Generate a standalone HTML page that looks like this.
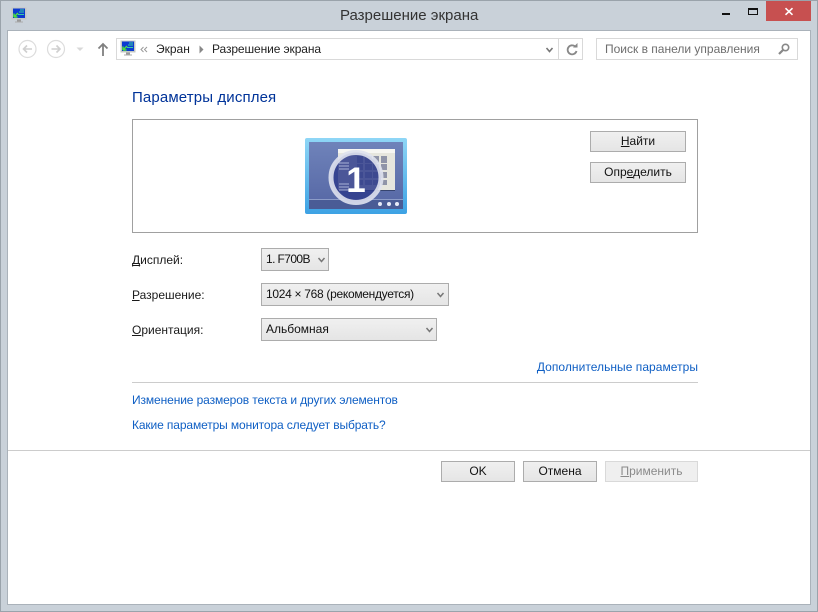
<!DOCTYPE html>
<html lang="ru"><head><meta charset="utf-8"><title>Разрешение экрана</title>
<style>
html,body{margin:0;padding:0}
body{width:818px;height:612px;overflow:hidden;position:relative;background:#c9d1d9;font-family:"Liberation Sans",sans-serif;font-size:12px;color:#1a1a1a}
.t{position:absolute;white-space:nowrap;line-height:16px;height:16px}
.box{position:absolute;box-sizing:border-box}
.btn{position:absolute;box-sizing:border-box;border:1px solid #acacac;background:linear-gradient(#f0f0f0,#e5e5e5);text-align:center;line-height:19px;height:21px;color:#111}
.sel{position:absolute;box-sizing:border-box;border:1px solid #acacac;background:linear-gradient(#f0f0f0,#e5e5e5);height:23px;line-height:21px;padding-left:4px;color:#111;white-space:nowrap}
.link{color:#0f5fc4}
u{text-decoration:underline;text-decoration-skip-ink:none}
svg{position:absolute;overflow:visible}
</style></head><body>
<div class="box" style="left:0;top:0;width:818px;height:612px;border:1px solid #9aa3ab"></div>
<div class="box" style="left:7px;top:30px;width:804px;height:575px;background:#fff;border:1px solid #aab2ba"></div>

<svg style="left:11px;top:7px" width="16" height="16" viewBox="0 0 16 16"><rect x="0.5" y="0.500" width="15" height="12" fill="#c4c8c4"/><rect x="2" y="1.500" width="12" height="9.500" fill="#0c3ad0"/><path d="M3 10l4-4M3 10V6.500M3 10h3.500" stroke="#4fe03c" stroke-width="1.500" fill="none"/><path d="M7 7.500h6M8 5h5M9 3h4" stroke="#38d0a0" stroke-width="1" fill="none"/><rect x="6" y="12.500" width="4" height="2" fill="#999"/><rect x="4" y="14.500" width="8" height="1" fill="#aaa"/></svg>
<div class="t" style="left:340px;top:8px;font-size:15px;color:#333">Разрешение экрана</div>

<div class="box" style="left:722px;top:13px;width:8px;height:2px;background:#111"></div>
<div class="box" style="left:748px;top:8px;width:10px;height:7px;border:1px solid #111;border-top-width:2px"></div>
<div class="box" style="left:766px;top:1px;width:45px;height:20px;background:#c75050"></div>
<svg style="left:785px;top:8px" width="8" height="7" viewBox="0 0 8 7"><path d="M0.500 0.200L7.500 6.800M7.500 0.200L0.500 6.800" stroke="#fff" stroke-width="1.600"/></svg>

<svg style="left:18px;top:40px" width="60" height="18" viewBox="0 0 60 18" fill="none"><circle cx="9.500" cy="9" r="8.500" stroke="#dcdcdc" stroke-width="1.200"/><path d="M14 9H6M9 5.500L5.500 9L9 12.500" stroke="#cfcfcf" stroke-width="1.600"/><circle cx="38" cy="9" r="8.500" stroke="#dcdcdc" stroke-width="1.200"/><path d="M33.500 9h8M38.500 5.500L42 9L38.500 12.500" stroke="#cfcfcf" stroke-width="1.600"/><path d="M58.500 7.500h7l-3.500 3.500z" fill="#d8d8d8"/></svg>
<svg style="left:97px;top:42px" width="12" height="14" viewBox="0 0 12 14" fill="none"><path d="M6 14V2M1.500 6.500L6 2l4.500 4.500" stroke="#808080" stroke-width="1.800"/></svg>

<div class="box" style="left:116px;top:38px;width:467px;height:22px;border:1px solid #d9d9d9"></div>
<div class="box" style="left:558px;top:38px;width:1px;height:22px;background:#d9d9d9"></div>
<svg style="left:120px;top:40px" width="16" height="16" viewBox="0 0 16 16"><rect x="0.500" y="0.500" width="15" height="12" fill="#c4c8c4"/><rect x="2" y="1.500" width="12" height="9.500" fill="#0c3ad0"/><path d="M3 10l4-4M3 10V6.500M3 10h3.500" stroke="#4fe03c" stroke-width="1.500" fill="none"/><path d="M7 7.500h6M8 5h5M9 3h4" stroke="#38d0a0" stroke-width="1" fill="none"/><rect x="6" y="12.500" width="4" height="2" fill="#999"/><rect x="4" y="14.500" width="8" height="1" fill="#aaa"/></svg>
<svg style="left:140px;top:46px" width="8" height="7" viewBox="0 0 8 7" fill="none"><path d="M3.500 1L1 3.500L3.500 6M7 1L4.500 3.500L7 6" stroke="#999" stroke-width="1"/></svg>
<div class="t" style="left:156px;top:41px;color:#222">Экран</div>
<svg style="left:199px;top:45px" width="5" height="9" viewBox="0 0 5 9"><path d="M0.500 0.500L4.500 4.500L0.500 8.500z" fill="#888"/></svg>
<div class="t" style="left:212px;top:41px;color:#222;letter-spacing:-0.1px">Разрешение экрана</div>
<svg style="left:546px;top:47px" width="7" height="6" viewBox="0 0 7 6" fill="none"><path d="M0.500 1L3.500 4.500L6.500 1" stroke="#777" stroke-width="1.600"/></svg>
<svg style="left:566px;top:43px" width="12" height="13" viewBox="0 0 12 13" fill="none"><path d="M9.800 4.200A4.500 4.500 0 1 0 10.500 8" stroke="#888" stroke-width="1.800"/><path d="M7 4.500h4.500V0z" fill="#888"/></svg>

<div class="box" style="left:596px;top:38px;width:202px;height:22px;border:1px solid #d9d9d9"></div>
<div class="t" style="left:605px;top:41px;color:#6d6d6d">Поиск в панели управления</div>
<svg style="left:778px;top:43px" width="12" height="12" viewBox="0 0 12 12" fill="none"><circle cx="7.500" cy="4.500" r="3.200" stroke="#888" stroke-width="1.600"/><path d="M5 7L1 11" stroke="#888" stroke-width="2.200"/></svg>

<div class="t" style="left:132px;top:90px;font-size:15px;color:#003399;letter-spacing:0.13px">Параметры дисплея</div>
<div class="box" style="left:132px;top:119px;width:566px;height:114px;border:1px solid #a0a0a0"></div>

<svg style="left:305px;top:138px" width="102" height="76" viewBox="0 0 102 76">
<defs><linearGradient id="g" x1="0" y1="0" x2="0" y2="1"><stop offset="0" stop-color="#6f83ba"/><stop offset="1" stop-color="#5566a4"/></linearGradient>
<linearGradient id="f" x1="0" y1="0" x2="0" y2="1"><stop offset="0" stop-color="#8fd6f6"/><stop offset="1" stop-color="#3da2e4"/></linearGradient></defs>
<rect x="0" y="0" width="102" height="76" rx="2" fill="url(#f)"/>
<rect x="4" y="4" width="94" height="67" fill="url(#g)"/>
<rect x="4" y="61" width="94" height="10" fill="#4a5c96"/>
<rect x="4" y="61" width="94" height="1" fill="#8c9cc8"/>
<rect x="33" y="11" width="57" height="41" fill="#e6e6de"/>
<rect x="33" y="11" width="57" height="4" fill="#f6f6f2"/>
<rect x="33" y="52" width="57" height="1" fill="#36446f"/>
<g fill="#8f94a8"><rect x="52" y="18" width="6" height="7"/><rect x="60" y="18" width="7" height="7"/><rect x="68" y="18" width="6" height="7"/><rect x="76" y="18" width="6" height="7"/><rect x="52" y="26" width="6" height="6"/><rect x="60" y="26" width="7" height="6"/><rect x="68" y="26" width="6" height="6"/><rect x="76" y="26" width="6" height="6"/><rect x="52" y="34" width="6" height="6"/><rect x="60" y="34" width="7" height="6"/><rect x="68" y="34" width="6" height="6"/><rect x="76" y="34" width="6" height="6"/><rect x="52" y="42" width="6" height="5"/><rect x="60" y="42" width="7" height="5"/><rect x="68" y="42" width="6" height="5"/><rect x="76" y="42" width="6" height="5"/></g>
<circle cx="51" cy="39.500" r="25" fill="#2f3c8c" fill-opacity="0.85" stroke="#dfe2ee" stroke-opacity="0.9" stroke-width="5"/>
<g stroke="#aab2d8" stroke-width="1"><path d="M34 25h10M34 28h10M34 31h10M34 46h10M34 49h10M34 52h10"/></g>
<text x="51" y="54" text-anchor="middle" font-family="Liberation Sans" font-weight="bold" font-size="35" fill="#fff">1</text>
<g fill="#e8ecf8"><circle cx="75" cy="66" r="2"/><circle cx="84" cy="66" r="2"/><circle cx="92" cy="66" r="2"/></g>
</svg>

<div class="btn" style="left:590px;top:131px;width:96px"><u>Н</u>айти</div>
<div class="btn" style="left:590px;top:162px;width:96px">Опр<u>е</u>делить</div>

<div class="t" style="left:132px;top:252px"><u>Д</u>исплей:</div>
<div class="t" style="left:132px;top:287px"><u>Р</u>азрешение:</div>
<div class="t" style="left:132px;top:322px"><u>О</u>риентация:</div>

<div class="sel" style="left:261px;top:248px;width:68px;letter-spacing:-0.6px">1. F700B</div>
<div class="sel" style="left:261px;top:283px;width:188px;letter-spacing:-0.3px">1024 × 768 (рекомендуется)</div>
<div class="sel" style="left:261px;top:318px;width:176px">Альбомная</div>
<svg style="left:317.500px;top:257px" width="7" height="6" viewBox="0 0 7 6" fill="none"><path d="M0.500 1L3.500 4.500L6.500 1" stroke="#777" stroke-width="1.500"/></svg>
<svg style="left:437px;top:292px" width="7" height="6" viewBox="0 0 7 6" fill="none"><path d="M0.500 1L3.500 4.500L6.500 1" stroke="#777" stroke-width="1.500"/></svg>
<svg style="left:426px;top:327px" width="7" height="6" viewBox="0 0 7 6" fill="none"><path d="M0.500 1L3.500 4.500L6.500 1" stroke="#777" stroke-width="1.500"/></svg>

<div class="t link" style="right:120px;top:359px;letter-spacing:0.04px">Дополнительные параметры</div>
<div class="box" style="left:132px;top:382px;width:566px;height:1px;background:#ccc"></div>
<div class="t link" style="left:132px;top:392px;letter-spacing:-0.11px">Изменение размеров текста и других элементов</div>
<div class="t link" style="left:132px;top:417px;letter-spacing:-0.12px">Какие параметры монитора следует выбрать?</div>

<div class="box" style="left:8px;top:450px;width:802px;height:1px;background:#ccc"></div>
<div class="btn" style="left:441px;top:461px;width:74px">OK</div>
<div class="btn" style="left:523px;top:461px;width:74px">Отмена</div>
<div class="btn" style="left:605px;top:461px;width:93px;border-color:#d9d9d9;background:#efefef;color:#8a8a8a"><u>П</u>рименить</div>
</body></html>
